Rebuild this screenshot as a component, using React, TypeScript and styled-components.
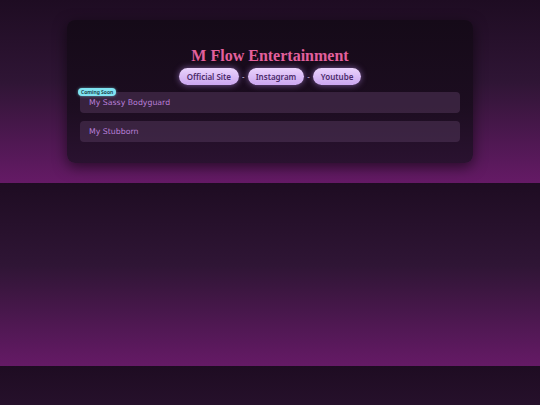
import React from 'react'
import styled, { createGlobalStyle } from 'styled-components'

const GlobalStyle = createGlobalStyle`
  body {
    margin: 0;
    font-family: 'Noto Sans', 'Open Sans', sans-serif;
    background: linear-gradient(180deg, #1e0c22 0%, #2f1535 45%, #651a66 100%);
  }
`

const Page = styled.div`
  padding: 20px 0 20px;
`

const Card = styled.section`
  position: relative;
  width: 406px;
  margin: 0 auto;
  box-sizing: border-box;
  padding: 26px 13px 21px;
  border-radius: 8px;
  background: linear-gradient(180deg, #150a18 0%, #1c0d20 60%, #2a1230 100%);
  box-shadow: 0 4px 14px rgba(0, 0, 0, 0.55);
`

const Title = styled.h1`
  margin: 0;
  text-align: center;
  font-family: 'Liberation Serif', 'DejaVu Serif', serif;
  font-weight: 700;
  font-size: 16px;
  line-height: 20px;
  color: #e3609c;
`

const Links = styled.nav`
  display: flex;
  justify-content: center;
  align-items: center;
  gap: 3px;
  margin-top: 2px;
`

const LinkButton = styled.a`
  display: flex;
  align-items: center;
  height: 17px;
  padding: 0 8px;
  border-radius: 9px;
  background: linear-gradient(180deg, #ead3fc 0%, #cba6f0 100%);
  box-shadow: 0 0 6px rgba(200, 150, 255, 0.55);
  color: #4b2b6a;
  font-size: 8px;
  font-weight: 600;
  text-decoration: none;
`

const Sep = styled.span`
  color: #c9b6d6;
  font-size: 8px;
`

const List = styled.ul`
  list-style: none;
  margin: 7px 0 0;
  padding: 0;
  display: flex;
  flex-direction: column;
  gap: 8px;
`

const Item = styled.li`
  position: relative;
  height: 21px;
  display: flex;
  align-items: center;
  padding-left: 9px;
  border-radius: 4px;
  background: rgba(80, 52, 88, 0.55);
  color: #b97fd8;
  font-family: 'DejaVu Sans', 'Noto Sans', sans-serif;
  font-size: 7.8px;
`

const Badge = styled.span`
  position: absolute;
  top: -4px;
  left: -2px;
  padding: 1px 3px;
  border-radius: 4px;
  background: #80e4f2;
  color: #12323a;
  font-family: 'Noto Sans', sans-serif;
  font-size: 5px;
  font-weight: 600;
  line-height: 6px;
  box-shadow: 0 0 3px rgba(128, 228, 242, 0.6);
`

const links = ['Official Site', 'Instagram', 'Youtube']

const items = [
  { name: 'My Sassy Bodyguard', badge: 'Coming Soon' },
  { name: 'My Stubborn' },
]

export default function App() {
  return (
    <>
      <GlobalStyle />
      <Page>
        <Card>
          <Title>M Flow Entertainment</Title>
          <Links>
            {links.map((l, i) => (
              <React.Fragment key={l}>
                {i > 0 && <Sep>-</Sep>}
                <LinkButton href="#">{l}</LinkButton>
              </React.Fragment>
            ))}
          </Links>
          <List>
            {items.map((it) => (
              <Item key={it.name}>
                {it.badge && <Badge>{it.badge}</Badge>}
                {it.name}
              </Item>
            ))}
          </List>
        </Card>
      </Page>
    </>
  )
}
